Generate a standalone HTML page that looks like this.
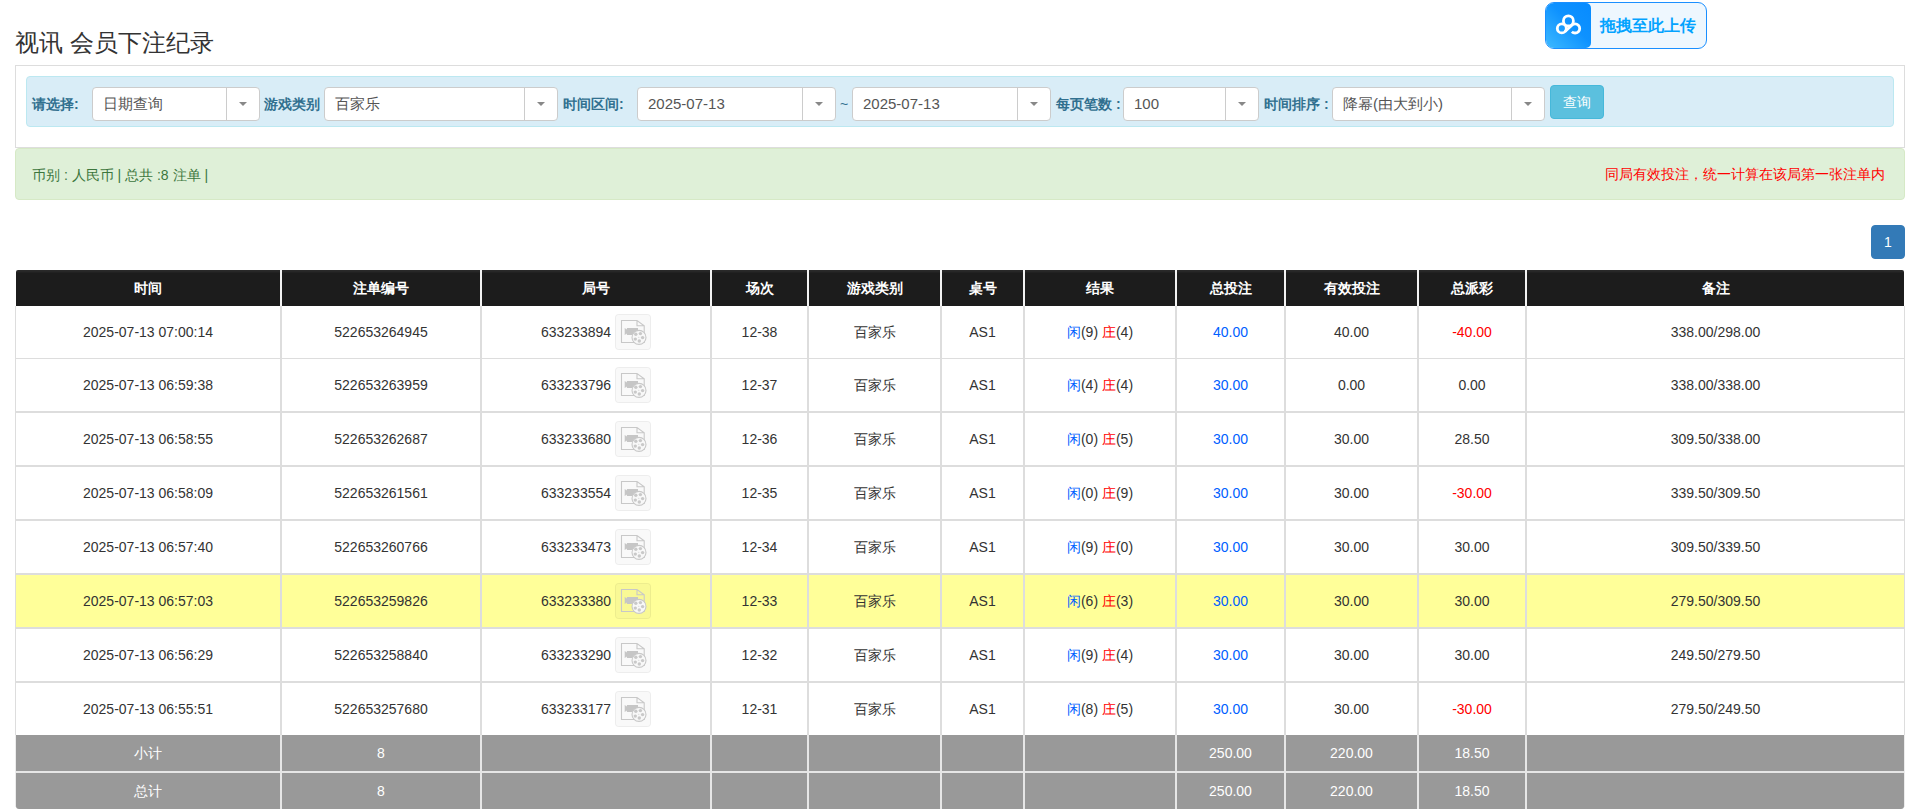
<!DOCTYPE html>
<html><head><meta charset="utf-8"><style>
*{box-sizing:border-box}
html,body{margin:0;padding:0;background:#fff;width:1913px;height:810px;overflow:hidden;position:relative;font-family:"Liberation Sans",sans-serif;color:#333}
.a{position:absolute}
.title{position:absolute;left:15px;top:27px;font-size:24px;line-height:32px;color:#333;white-space:nowrap}
.up{position:absolute;left:1545px;top:2px;width:162px;height:47px;border:1px solid #1a8fff;border-radius:9px;background:#eef7fe}
.upic{position:absolute;left:0;top:0;width:45px;height:45px;border-radius:8px 5px 5px 8px;background:linear-gradient(45deg,#3db9ff 0%,#0e92ff 55%,#078bff 100%)}
.uptx{position:absolute;left:54px;top:0;line-height:45px;font-size:16px;font-weight:bold;color:#03a3ff;white-space:nowrap}
.panel{position:absolute;left:15px;top:65px;width:1890px;height:83px;border:1px solid #ddd;border-bottom-color:#ddd}
.well{position:absolute;left:26px;top:76px;width:1868px;height:51px;background:#d9edf7;border:1px solid #bce8f1;border-radius:4px}
.lab{position:absolute;top:87px;line-height:34px;font-size:14px;font-weight:bold;color:#31708f;white-space:nowrap}
.sel{position:absolute;top:87px;height:34px;background:#fff;border:1px solid #ccc;border-radius:4px}
.st{position:absolute;left:10px;top:0;line-height:32px;font-size:15px;color:#555;white-space:nowrap}
.dv{position:absolute;top:0;width:1px;height:32px;background:#ccc}
.ar{position:absolute;top:14px;width:0;height:0;border-left:4px solid transparent;border-right:4px solid transparent;border-top:4px solid #888}
.tilde{position:absolute;left:840px;top:87px;line-height:34px;font-size:14px;color:#31708f}
.btn{position:absolute;left:1550px;top:85px;width:54px;height:34px;background:#5bc0de;border:1px solid #46b8da;border-radius:4px;color:#fff;font-size:14px;line-height:32px;text-align:center}
.alert{position:absolute;left:15px;top:148px;width:1890px;height:52px;background:#dff0d8;border:1px solid #d6e9c6;border-radius:4px}
.al{position:absolute;left:32px;top:149px;line-height:52px;font-size:14px;color:#3c763d;white-space:nowrap}
.ar2{position:absolute;right:28px;top:148px;line-height:52px;font-size:14px;color:#ff0000;white-space:nowrap}
.pg{position:absolute;left:1871px;top:225px;width:34px;height:34px;background:#337ab7;border:1px solid #337ab7;border-radius:4px;color:#fff;font-size:14px;line-height:32px;text-align:center}
.c{position:absolute;text-align:center;font-size:14px;color:#333;white-space:nowrap}
.th{color:#fff;font-weight:bold}
.thbg{position:absolute;background:linear-gradient(#2a2a2a 0px,#262626 2px,#1c1c1c 3px,#1c1c1c 100%);border-radius:2px 2px 0 0}
.hl{position:absolute;background:#f2f2f2}
.ln{position:absolute;background:#dddddd}
.gbg{position:absolute;background:#999;border-radius:0 0 3px 3px}
.gl{position:absolute;background:#e6e6e6}
.gt{color:#fff}
.bl{color:#0060ff}
.rd{color:#ff0000}
.ic{display:inline-block;width:36px;height:36px;vertical-align:middle;margin-left:4px;border:1px solid rgba(0,0,0,0.05);border-radius:4px;background:rgba(0,0,0,0.025);position:relative;top:-1px;line-height:0}
.ic svg{position:absolute;left:-1px;top:-1px}
</style></head><body>
<div class="title">视讯 会员下注纪录</div>
<div class="up"><div class="upic"><svg width="45" height="45" viewBox="0 0 45 45" style="position:absolute;left:0;top:0"><g fill="none" stroke="#fff" stroke-width="2.8"><circle cx="22.4" cy="17.9" r="5"/><circle cx="15.8" cy="25.4" r="4.5"/><path d="M19 28.6L25.85 22.15A4.6 4.6 0 1 1 25.85 28.65"/></g></svg></div><div class="uptx">拖拽至此上传</div></div>
<div class="panel"></div>
<div class="well"></div>
<div class="lab" style="left:32px">请选择:</div><div class="lab" style="left:264px">游戏类别</div><div class="lab" style="left:563px">时间区间:</div><div class="lab" style="left:1056px">每页笔数 :</div><div class="lab" style="left:1264px">时间排序 :</div>
<div class="sel" style="left:92px;width:168px"><span class="st">日期查询</span><i class="dv" style="left:133px"></i><i class="ar" style="left:146px"></i></div><div class="sel" style="left:324px;width:234px"><span class="st">百家乐</span><i class="dv" style="left:199px"></i><i class="ar" style="left:212px"></i></div><div class="sel" style="left:637px;width:199px"><span class="st">2025-07-13</span><i class="dv" style="left:164px"></i><i class="ar" style="left:177px"></i></div><div class="sel" style="left:852px;width:199px"><span class="st">2025-07-13</span><i class="dv" style="left:164px"></i><i class="ar" style="left:177px"></i></div><div class="sel" style="left:1123px;width:136px"><span class="st">100</span><i class="dv" style="left:101px"></i><i class="ar" style="left:114px"></i></div><div class="sel" style="left:1332px;width:213px"><span class="st">降幂(由大到小)</span><i class="dv" style="left:178px"></i><i class="ar" style="left:191px"></i></div>
<div class="tilde">~</div>
<div class="btn">查询</div>
<div class="alert"></div>
<div class="al">币别 : 人民币 | 总共 :8 注单 |</div>
<div class="ar2">同局有效投注，统一计算在该局第一张注单内</div>
<div class="pg">1</div>
<div class="thbg" style="left:16px;top:270px;width:1888px;height:36px"></div>
<div class="c th" style="left:16px;top:270px;width:264px;height:36px;line-height:36px">时间</div>
<div class="c th" style="left:282px;top:270px;width:198px;height:36px;line-height:36px">注单编号</div>
<div class="c th" style="left:482px;top:270px;width:228px;height:36px;line-height:36px">局号</div>
<div class="c th" style="left:712px;top:270px;width:95px;height:36px;line-height:36px">场次</div>
<div class="c th" style="left:809px;top:270px;width:131px;height:36px;line-height:36px">游戏类别</div>
<div class="c th" style="left:942px;top:270px;width:81px;height:36px;line-height:36px">桌号</div>
<div class="c th" style="left:1025px;top:270px;width:150px;height:36px;line-height:36px">结果</div>
<div class="c th" style="left:1177px;top:270px;width:107px;height:36px;line-height:36px">总投注</div>
<div class="c th" style="left:1286px;top:270px;width:131px;height:36px;line-height:36px">有效投注</div>
<div class="c th" style="left:1419px;top:270px;width:106px;height:36px;line-height:36px">总派彩</div>
<div class="c th" style="left:1527px;top:270px;width:377px;height:36px;line-height:36px">备注</div>
<div class="ln" style="left:15px;top:306px;width:1px;height:429px"></div>
<div class="ln" style="left:1904px;top:306px;width:1px;height:429px"></div>
<div class="c " style="left:16px;top:306px;width:264px;height:52px;line-height:52px">2025-07-13 07:00:14</div>
<div class="c " style="left:282px;top:306px;width:198px;height:52px;line-height:52px">522653264945</div>
<div class="c " style="left:482px;top:306px;width:228px;height:52px;line-height:52px">633233894<span class="ic"><svg width="36" height="36" viewBox="0 0 36 36"><path d="M6.5 6.5H22L29.2 11.7V28.5H6.5Z M22 6.5V11.7H29.2" fill="none" stroke="#c8c8c8" stroke-width="1.1"/><path d="M9.7 13.9L11.9 15.5V13.9H23V21H11.9V19.4L9.7 21Z" fill="#c6c6c6"/><circle cx="24" cy="23.4" r="7" fill="#f8f8f8" stroke="#c8c8c8" stroke-width="1.1"/><g fill="#c9c9c9"><circle cx="20.8" cy="20.3" r="1.7"/><circle cx="25.4" cy="19.6" r="1.7"/><circle cx="27.6" cy="23.6" r="1.7"/><circle cx="24.3" cy="27" r="1.7"/><circle cx="20.3" cy="25.1" r="1.7"/><circle cx="23.8" cy="23.2" r="0.5"/></g></svg></span></div>
<div class="c " style="left:712px;top:306px;width:95px;height:52px;line-height:52px">12-38</div>
<div class="c " style="left:809px;top:306px;width:131px;height:52px;line-height:52px">百家乐</div>
<div class="c " style="left:942px;top:306px;width:81px;height:52px;line-height:52px">AS1</div>
<div class="c " style="left:1025px;top:306px;width:150px;height:52px;line-height:52px"><span class="bl">闲</span>(9) <span class="rd">庄</span>(4)</div>
<div class="c " style="left:1177px;top:306px;width:107px;height:52px;line-height:52px"><span class="bl">40.00</span></div>
<div class="c " style="left:1286px;top:306px;width:131px;height:52px;line-height:52px">40.00</div>
<div class="c " style="left:1419px;top:306px;width:106px;height:52px;line-height:52px"><span class="rd">-40.00</span></div>
<div class="c " style="left:1527px;top:306px;width:377px;height:52px;line-height:52px">338.00/298.00</div>
<div class="ln" style="left:16px;top:358px;width:1888px;height:1px"></div>
<div class="c " style="left:16px;top:359px;width:264px;height:52px;line-height:52px">2025-07-13 06:59:38</div>
<div class="c " style="left:282px;top:359px;width:198px;height:52px;line-height:52px">522653263959</div>
<div class="c " style="left:482px;top:359px;width:228px;height:52px;line-height:52px">633233796<span class="ic"><svg width="36" height="36" viewBox="0 0 36 36"><path d="M6.5 6.5H22L29.2 11.7V28.5H6.5Z M22 6.5V11.7H29.2" fill="none" stroke="#c8c8c8" stroke-width="1.1"/><path d="M9.7 13.9L11.9 15.5V13.9H23V21H11.9V19.4L9.7 21Z" fill="#c6c6c6"/><circle cx="24" cy="23.4" r="7" fill="#f8f8f8" stroke="#c8c8c8" stroke-width="1.1"/><g fill="#c9c9c9"><circle cx="20.8" cy="20.3" r="1.7"/><circle cx="25.4" cy="19.6" r="1.7"/><circle cx="27.6" cy="23.6" r="1.7"/><circle cx="24.3" cy="27" r="1.7"/><circle cx="20.3" cy="25.1" r="1.7"/><circle cx="23.8" cy="23.2" r="0.5"/></g></svg></span></div>
<div class="c " style="left:712px;top:359px;width:95px;height:52px;line-height:52px">12-37</div>
<div class="c " style="left:809px;top:359px;width:131px;height:52px;line-height:52px">百家乐</div>
<div class="c " style="left:942px;top:359px;width:81px;height:52px;line-height:52px">AS1</div>
<div class="c " style="left:1025px;top:359px;width:150px;height:52px;line-height:52px"><span class="bl">闲</span>(4) <span class="rd">庄</span>(4)</div>
<div class="c " style="left:1177px;top:359px;width:107px;height:52px;line-height:52px"><span class="bl">30.00</span></div>
<div class="c " style="left:1286px;top:359px;width:131px;height:52px;line-height:52px">0.00</div>
<div class="c " style="left:1419px;top:359px;width:106px;height:52px;line-height:52px">0.00</div>
<div class="c " style="left:1527px;top:359px;width:377px;height:52px;line-height:52px">338.00/338.00</div>
<div class="ln" style="left:16px;top:411px;width:1888px;height:2px"></div>
<div class="c " style="left:16px;top:413px;width:264px;height:52px;line-height:52px">2025-07-13 06:58:55</div>
<div class="c " style="left:282px;top:413px;width:198px;height:52px;line-height:52px">522653262687</div>
<div class="c " style="left:482px;top:413px;width:228px;height:52px;line-height:52px">633233680<span class="ic"><svg width="36" height="36" viewBox="0 0 36 36"><path d="M6.5 6.5H22L29.2 11.7V28.5H6.5Z M22 6.5V11.7H29.2" fill="none" stroke="#c8c8c8" stroke-width="1.1"/><path d="M9.7 13.9L11.9 15.5V13.9H23V21H11.9V19.4L9.7 21Z" fill="#c6c6c6"/><circle cx="24" cy="23.4" r="7" fill="#f8f8f8" stroke="#c8c8c8" stroke-width="1.1"/><g fill="#c9c9c9"><circle cx="20.8" cy="20.3" r="1.7"/><circle cx="25.4" cy="19.6" r="1.7"/><circle cx="27.6" cy="23.6" r="1.7"/><circle cx="24.3" cy="27" r="1.7"/><circle cx="20.3" cy="25.1" r="1.7"/><circle cx="23.8" cy="23.2" r="0.5"/></g></svg></span></div>
<div class="c " style="left:712px;top:413px;width:95px;height:52px;line-height:52px">12-36</div>
<div class="c " style="left:809px;top:413px;width:131px;height:52px;line-height:52px">百家乐</div>
<div class="c " style="left:942px;top:413px;width:81px;height:52px;line-height:52px">AS1</div>
<div class="c " style="left:1025px;top:413px;width:150px;height:52px;line-height:52px"><span class="bl">闲</span>(0) <span class="rd">庄</span>(5)</div>
<div class="c " style="left:1177px;top:413px;width:107px;height:52px;line-height:52px"><span class="bl">30.00</span></div>
<div class="c " style="left:1286px;top:413px;width:131px;height:52px;line-height:52px">30.00</div>
<div class="c " style="left:1419px;top:413px;width:106px;height:52px;line-height:52px">28.50</div>
<div class="c " style="left:1527px;top:413px;width:377px;height:52px;line-height:52px">309.50/338.00</div>
<div class="ln" style="left:16px;top:465px;width:1888px;height:2px"></div>
<div class="c " style="left:16px;top:467px;width:264px;height:52px;line-height:52px">2025-07-13 06:58:09</div>
<div class="c " style="left:282px;top:467px;width:198px;height:52px;line-height:52px">522653261561</div>
<div class="c " style="left:482px;top:467px;width:228px;height:52px;line-height:52px">633233554<span class="ic"><svg width="36" height="36" viewBox="0 0 36 36"><path d="M6.5 6.5H22L29.2 11.7V28.5H6.5Z M22 6.5V11.7H29.2" fill="none" stroke="#c8c8c8" stroke-width="1.1"/><path d="M9.7 13.9L11.9 15.5V13.9H23V21H11.9V19.4L9.7 21Z" fill="#c6c6c6"/><circle cx="24" cy="23.4" r="7" fill="#f8f8f8" stroke="#c8c8c8" stroke-width="1.1"/><g fill="#c9c9c9"><circle cx="20.8" cy="20.3" r="1.7"/><circle cx="25.4" cy="19.6" r="1.7"/><circle cx="27.6" cy="23.6" r="1.7"/><circle cx="24.3" cy="27" r="1.7"/><circle cx="20.3" cy="25.1" r="1.7"/><circle cx="23.8" cy="23.2" r="0.5"/></g></svg></span></div>
<div class="c " style="left:712px;top:467px;width:95px;height:52px;line-height:52px">12-35</div>
<div class="c " style="left:809px;top:467px;width:131px;height:52px;line-height:52px">百家乐</div>
<div class="c " style="left:942px;top:467px;width:81px;height:52px;line-height:52px">AS1</div>
<div class="c " style="left:1025px;top:467px;width:150px;height:52px;line-height:52px"><span class="bl">闲</span>(0) <span class="rd">庄</span>(9)</div>
<div class="c " style="left:1177px;top:467px;width:107px;height:52px;line-height:52px"><span class="bl">30.00</span></div>
<div class="c " style="left:1286px;top:467px;width:131px;height:52px;line-height:52px">30.00</div>
<div class="c " style="left:1419px;top:467px;width:106px;height:52px;line-height:52px"><span class="rd">-30.00</span></div>
<div class="c " style="left:1527px;top:467px;width:377px;height:52px;line-height:52px">339.50/309.50</div>
<div class="ln" style="left:16px;top:519px;width:1888px;height:2px"></div>
<div class="c " style="left:16px;top:521px;width:264px;height:52px;line-height:52px">2025-07-13 06:57:40</div>
<div class="c " style="left:282px;top:521px;width:198px;height:52px;line-height:52px">522653260766</div>
<div class="c " style="left:482px;top:521px;width:228px;height:52px;line-height:52px">633233473<span class="ic"><svg width="36" height="36" viewBox="0 0 36 36"><path d="M6.5 6.5H22L29.2 11.7V28.5H6.5Z M22 6.5V11.7H29.2" fill="none" stroke="#c8c8c8" stroke-width="1.1"/><path d="M9.7 13.9L11.9 15.5V13.9H23V21H11.9V19.4L9.7 21Z" fill="#c6c6c6"/><circle cx="24" cy="23.4" r="7" fill="#f8f8f8" stroke="#c8c8c8" stroke-width="1.1"/><g fill="#c9c9c9"><circle cx="20.8" cy="20.3" r="1.7"/><circle cx="25.4" cy="19.6" r="1.7"/><circle cx="27.6" cy="23.6" r="1.7"/><circle cx="24.3" cy="27" r="1.7"/><circle cx="20.3" cy="25.1" r="1.7"/><circle cx="23.8" cy="23.2" r="0.5"/></g></svg></span></div>
<div class="c " style="left:712px;top:521px;width:95px;height:52px;line-height:52px">12-34</div>
<div class="c " style="left:809px;top:521px;width:131px;height:52px;line-height:52px">百家乐</div>
<div class="c " style="left:942px;top:521px;width:81px;height:52px;line-height:52px">AS1</div>
<div class="c " style="left:1025px;top:521px;width:150px;height:52px;line-height:52px"><span class="bl">闲</span>(9) <span class="rd">庄</span>(0)</div>
<div class="c " style="left:1177px;top:521px;width:107px;height:52px;line-height:52px"><span class="bl">30.00</span></div>
<div class="c " style="left:1286px;top:521px;width:131px;height:52px;line-height:52px">30.00</div>
<div class="c " style="left:1419px;top:521px;width:106px;height:52px;line-height:52px">30.00</div>
<div class="c " style="left:1527px;top:521px;width:377px;height:52px;line-height:52px">309.50/339.50</div>
<div class="ln" style="left:16px;top:573px;width:1888px;height:2px"></div>
<div style="position:absolute;left:16px;top:575px;width:1888px;height:52px;background:#ffff99"></div>
<div class="c " style="left:16px;top:575px;width:264px;height:52px;line-height:52px">2025-07-13 06:57:03</div>
<div class="c " style="left:282px;top:575px;width:198px;height:52px;line-height:52px">522653259826</div>
<div class="c " style="left:482px;top:575px;width:228px;height:52px;line-height:52px">633233380<span class="ic"><svg width="36" height="36" viewBox="0 0 36 36"><path d="M6.5 6.5H22L29.2 11.7V28.5H6.5Z M22 6.5V11.7H29.2" fill="none" stroke="#c8c8c8" stroke-width="1.1"/><path d="M9.7 13.9L11.9 15.5V13.9H23V21H11.9V19.4L9.7 21Z" fill="#c6c6c6"/><circle cx="24" cy="23.4" r="7" fill="#f8f8f8" stroke="#c8c8c8" stroke-width="1.1"/><g fill="#c9c9c9"><circle cx="20.8" cy="20.3" r="1.7"/><circle cx="25.4" cy="19.6" r="1.7"/><circle cx="27.6" cy="23.6" r="1.7"/><circle cx="24.3" cy="27" r="1.7"/><circle cx="20.3" cy="25.1" r="1.7"/><circle cx="23.8" cy="23.2" r="0.5"/></g></svg></span></div>
<div class="c " style="left:712px;top:575px;width:95px;height:52px;line-height:52px">12-33</div>
<div class="c " style="left:809px;top:575px;width:131px;height:52px;line-height:52px">百家乐</div>
<div class="c " style="left:942px;top:575px;width:81px;height:52px;line-height:52px">AS1</div>
<div class="c " style="left:1025px;top:575px;width:150px;height:52px;line-height:52px"><span class="bl">闲</span>(6) <span class="rd">庄</span>(3)</div>
<div class="c " style="left:1177px;top:575px;width:107px;height:52px;line-height:52px"><span class="bl">30.00</span></div>
<div class="c " style="left:1286px;top:575px;width:131px;height:52px;line-height:52px">30.00</div>
<div class="c " style="left:1419px;top:575px;width:106px;height:52px;line-height:52px">30.00</div>
<div class="c " style="left:1527px;top:575px;width:377px;height:52px;line-height:52px">279.50/309.50</div>
<div class="ln" style="left:16px;top:627px;width:1888px;height:2px"></div>
<div class="c " style="left:16px;top:629px;width:264px;height:52px;line-height:52px">2025-07-13 06:56:29</div>
<div class="c " style="left:282px;top:629px;width:198px;height:52px;line-height:52px">522653258840</div>
<div class="c " style="left:482px;top:629px;width:228px;height:52px;line-height:52px">633233290<span class="ic"><svg width="36" height="36" viewBox="0 0 36 36"><path d="M6.5 6.5H22L29.2 11.7V28.5H6.5Z M22 6.5V11.7H29.2" fill="none" stroke="#c8c8c8" stroke-width="1.1"/><path d="M9.7 13.9L11.9 15.5V13.9H23V21H11.9V19.4L9.7 21Z" fill="#c6c6c6"/><circle cx="24" cy="23.4" r="7" fill="#f8f8f8" stroke="#c8c8c8" stroke-width="1.1"/><g fill="#c9c9c9"><circle cx="20.8" cy="20.3" r="1.7"/><circle cx="25.4" cy="19.6" r="1.7"/><circle cx="27.6" cy="23.6" r="1.7"/><circle cx="24.3" cy="27" r="1.7"/><circle cx="20.3" cy="25.1" r="1.7"/><circle cx="23.8" cy="23.2" r="0.5"/></g></svg></span></div>
<div class="c " style="left:712px;top:629px;width:95px;height:52px;line-height:52px">12-32</div>
<div class="c " style="left:809px;top:629px;width:131px;height:52px;line-height:52px">百家乐</div>
<div class="c " style="left:942px;top:629px;width:81px;height:52px;line-height:52px">AS1</div>
<div class="c " style="left:1025px;top:629px;width:150px;height:52px;line-height:52px"><span class="bl">闲</span>(9) <span class="rd">庄</span>(4)</div>
<div class="c " style="left:1177px;top:629px;width:107px;height:52px;line-height:52px"><span class="bl">30.00</span></div>
<div class="c " style="left:1286px;top:629px;width:131px;height:52px;line-height:52px">30.00</div>
<div class="c " style="left:1419px;top:629px;width:106px;height:52px;line-height:52px">30.00</div>
<div class="c " style="left:1527px;top:629px;width:377px;height:52px;line-height:52px">249.50/279.50</div>
<div class="ln" style="left:16px;top:681px;width:1888px;height:2px"></div>
<div class="c " style="left:16px;top:683px;width:264px;height:52px;line-height:52px">2025-07-13 06:55:51</div>
<div class="c " style="left:282px;top:683px;width:198px;height:52px;line-height:52px">522653257680</div>
<div class="c " style="left:482px;top:683px;width:228px;height:52px;line-height:52px">633233177<span class="ic"><svg width="36" height="36" viewBox="0 0 36 36"><path d="M6.5 6.5H22L29.2 11.7V28.5H6.5Z M22 6.5V11.7H29.2" fill="none" stroke="#c8c8c8" stroke-width="1.1"/><path d="M9.7 13.9L11.9 15.5V13.9H23V21H11.9V19.4L9.7 21Z" fill="#c6c6c6"/><circle cx="24" cy="23.4" r="7" fill="#f8f8f8" stroke="#c8c8c8" stroke-width="1.1"/><g fill="#c9c9c9"><circle cx="20.8" cy="20.3" r="1.7"/><circle cx="25.4" cy="19.6" r="1.7"/><circle cx="27.6" cy="23.6" r="1.7"/><circle cx="24.3" cy="27" r="1.7"/><circle cx="20.3" cy="25.1" r="1.7"/><circle cx="23.8" cy="23.2" r="0.5"/></g></svg></span></div>
<div class="c " style="left:712px;top:683px;width:95px;height:52px;line-height:52px">12-31</div>
<div class="c " style="left:809px;top:683px;width:131px;height:52px;line-height:52px">百家乐</div>
<div class="c " style="left:942px;top:683px;width:81px;height:52px;line-height:52px">AS1</div>
<div class="c " style="left:1025px;top:683px;width:150px;height:52px;line-height:52px"><span class="bl">闲</span>(8) <span class="rd">庄</span>(5)</div>
<div class="c " style="left:1177px;top:683px;width:107px;height:52px;line-height:52px"><span class="bl">30.00</span></div>
<div class="c " style="left:1286px;top:683px;width:131px;height:52px;line-height:52px">30.00</div>
<div class="c " style="left:1419px;top:683px;width:106px;height:52px;line-height:52px"><span class="rd">-30.00</span></div>
<div class="c " style="left:1527px;top:683px;width:377px;height:52px;line-height:52px">279.50/249.50</div>
<div class="ln" style="left:280px;top:306px;width:2px;height:429px"></div>
<div class="hl" style="left:280px;top:270px;width:2px;height:36px"></div>
<div class="ln" style="left:480px;top:306px;width:2px;height:429px"></div>
<div class="hl" style="left:480px;top:270px;width:2px;height:36px"></div>
<div class="ln" style="left:710px;top:306px;width:2px;height:429px"></div>
<div class="hl" style="left:710px;top:270px;width:2px;height:36px"></div>
<div class="ln" style="left:807px;top:306px;width:2px;height:429px"></div>
<div class="hl" style="left:807px;top:270px;width:2px;height:36px"></div>
<div class="ln" style="left:940px;top:306px;width:2px;height:429px"></div>
<div class="hl" style="left:940px;top:270px;width:2px;height:36px"></div>
<div class="ln" style="left:1023px;top:306px;width:2px;height:429px"></div>
<div class="hl" style="left:1023px;top:270px;width:2px;height:36px"></div>
<div class="ln" style="left:1175px;top:306px;width:2px;height:429px"></div>
<div class="hl" style="left:1175px;top:270px;width:2px;height:36px"></div>
<div class="ln" style="left:1284px;top:306px;width:2px;height:429px"></div>
<div class="hl" style="left:1284px;top:270px;width:2px;height:36px"></div>
<div class="ln" style="left:1417px;top:306px;width:2px;height:429px"></div>
<div class="hl" style="left:1417px;top:270px;width:2px;height:36px"></div>
<div class="ln" style="left:1525px;top:306px;width:2px;height:429px"></div>
<div class="hl" style="left:1525px;top:270px;width:2px;height:36px"></div>
<div class="gbg" style="left:16px;top:735px;width:1888px;height:74px"></div>
<div class="gl" style="left:15px;top:771px;width:1890px;height:2px"></div>
<div class="gl" style="left:15px;top:735px;width:1px;height:72px;background:#ececec"></div>
<div class="gl" style="left:1904px;top:735px;width:1px;height:72px;background:#ececec"></div>
<div class="gl" style="left:280px;top:735px;width:2px;height:74px"></div>
<div class="gl" style="left:480px;top:735px;width:2px;height:74px"></div>
<div class="gl" style="left:710px;top:735px;width:2px;height:74px"></div>
<div class="gl" style="left:807px;top:735px;width:2px;height:74px"></div>
<div class="gl" style="left:940px;top:735px;width:2px;height:74px"></div>
<div class="gl" style="left:1023px;top:735px;width:2px;height:74px"></div>
<div class="gl" style="left:1175px;top:735px;width:2px;height:74px"></div>
<div class="gl" style="left:1284px;top:735px;width:2px;height:74px"></div>
<div class="gl" style="left:1417px;top:735px;width:2px;height:74px"></div>
<div class="gl" style="left:1525px;top:735px;width:2px;height:74px"></div>
<div class="c gt" style="left:16px;top:735px;width:264px;height:36px;line-height:36px">小计</div>
<div class="c gt" style="left:282px;top:735px;width:198px;height:36px;line-height:36px">8</div>
<div class="c gt" style="left:1177px;top:735px;width:107px;height:36px;line-height:36px">250.00</div>
<div class="c gt" style="left:1286px;top:735px;width:131px;height:36px;line-height:36px">220.00</div>
<div class="c gt" style="left:1419px;top:735px;width:106px;height:36px;line-height:36px">18.50</div>
<div class="c gt" style="left:16px;top:773px;width:264px;height:36px;line-height:36px">总计</div>
<div class="c gt" style="left:282px;top:773px;width:198px;height:36px;line-height:36px">8</div>
<div class="c gt" style="left:1177px;top:773px;width:107px;height:36px;line-height:36px">250.00</div>
<div class="c gt" style="left:1286px;top:773px;width:131px;height:36px;line-height:36px">220.00</div>
<div class="c gt" style="left:1419px;top:773px;width:106px;height:36px;line-height:36px">18.50</div>
</body></html>
